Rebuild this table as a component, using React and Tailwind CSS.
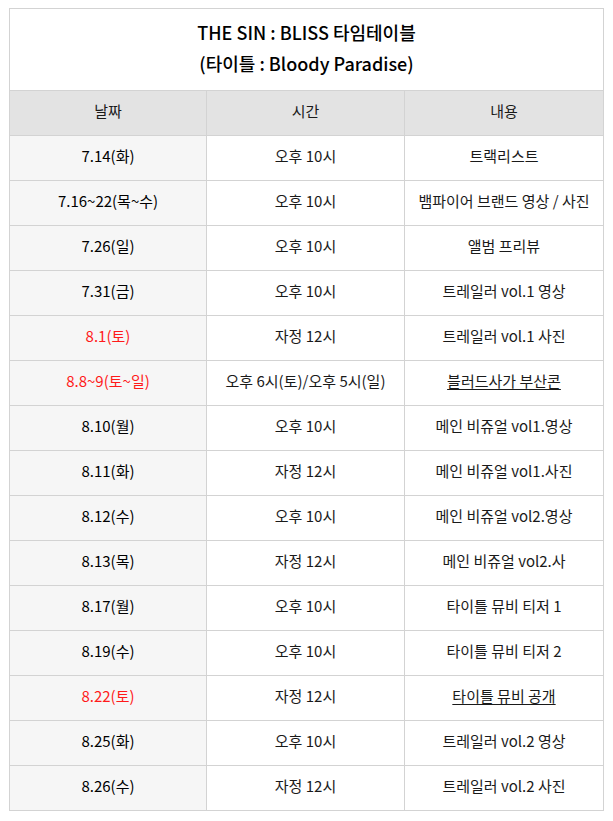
const rows = [
  { date: "7.14(화)", time: "오후 10시", content: "트랙리스트" },
  { date: "7.16~22(목~수)", time: "오후 10시", content: "뱀파이어 브랜드 영상 / 사진" },
  { date: "7.26(일)", time: "오후 10시", content: "앨범 프리뷰" },
  { date: "7.31(금)", time: "오후 10시", content: "트레일러 vol.1 영상" },
  { date: "8.1(토)", time: "자정 12시", content: "트레일러 vol.1 사진", red: true },
  { date: "8.8~9(토~일)", time: "오후 6시(토)/오후 5시(일)", content: "블러드사가 부산콘", red: true, link: true },
  { date: "8.10(월)", time: "오후 10시", content: "메인 비쥬얼 vol1.영상" },
  { date: "8.11(화)", time: "자정 12시", content: "메인 비쥬얼 vol1.사진" },
  { date: "8.12(수)", time: "오후 10시", content: "메인 비쥬얼 vol2.영상" },
  { date: "8.13(목)", time: "자정 12시", content: "메인 비쥬얼 vol2.사" },
  { date: "8.17(월)", time: "오후 10시", content: "타이틀 뮤비 티저 1" },
  { date: "8.19(수)", time: "오후 10시", content: "타이틀 뮤비 티저 2" },
  { date: "8.22(토)", time: "자정 12시", content: "타이틀 뮤비 공개", red: true, link: true },
  { date: "8.25(화)", time: "오후 10시", content: "트레일러 vol.2 영상" },
  { date: "8.26(수)", time: "자정 12시", content: "트레일러 vol.2 사진" }
];

const cell = "h-[45px] border border-[#d3d3d3] pb-[3px]";

export default function App() {
  return (
    <div
      className="min-h-[821px] bg-white pl-[9px] pt-[8px] text-[#1a1a1a]"
      style={{ fontFamily: '"Noto Sans CJK KR", "Noto Sans", sans-serif' }}
    >
      <table className="w-[594px] table-fixed border-collapse text-center text-[15px]">
        <colgroup>
          <col className="w-[197px]" />
          <col className="w-[198px]" />
          <col className="w-[199px]" />
        </colgroup>
        <thead>
          <tr>
            <th
              colSpan={3}
              className="h-[82px] border border-[#d3d3d3] bg-white pb-[4px] text-[18px] font-medium leading-[31px] text-black"
            >
              THE SIN : BLISS 타임테이블
              <br />
              (타이틀 : Bloody Paradise)
            </th>
          </tr>
          <tr className="bg-[#e3e3e3]">
            <th className={`${cell} font-normal`}>날짜</th>
            <th className={`${cell} font-normal`}>시간</th>
            <th className={`${cell} font-normal`}>내용</th>
          </tr>
        </thead>
        <tbody>
          {rows.map((r) => (
            <tr key={r.date}>
              <td className={`${cell} bg-[#f6f6f6] ${r.red ? "text-[#ff1a1a]" : "text-black"}`}>
                {r.date}
              </td>
              <td className={`${cell} bg-white`}>{r.time}</td>
              <td className={`${cell} bg-white`}>
                {r.link ? <span className="underline underline-offset-2">{r.content}</span> : r.content}
              </td>
            </tr>
          ))}
        </tbody>
      </table>
    </div>
  );
}
